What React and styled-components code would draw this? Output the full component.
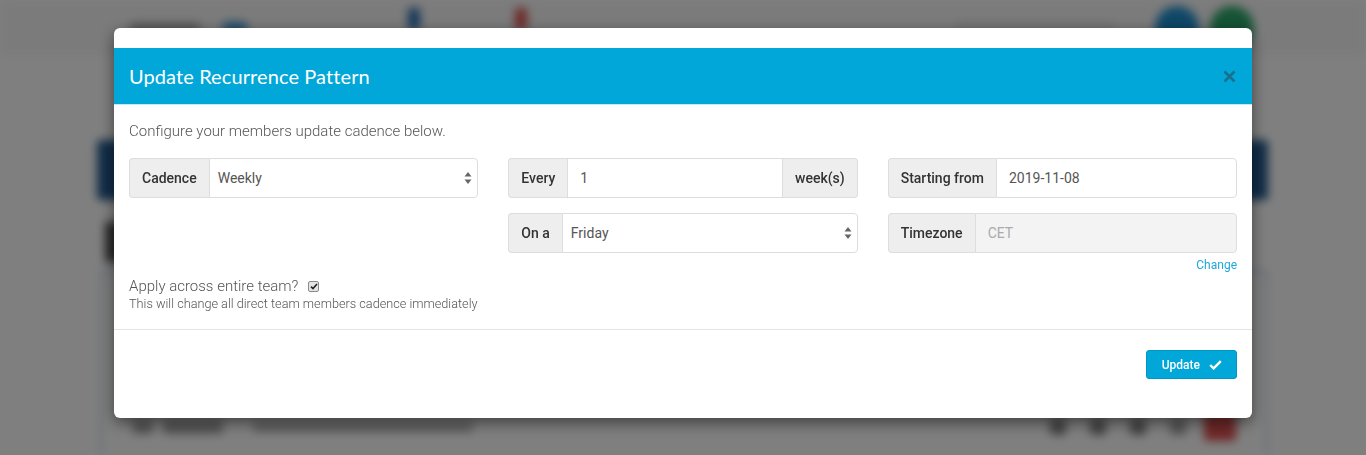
import React from "react";
import styled, { createGlobalStyle } from "styled-components";

const Global = createGlobalStyle`
  html, body { margin: 0; padding: 0; }
  body {
    width: 1366px;
    height: 455px;
    overflow: hidden;
    background: #fff;
    font-family: Roboto, "Liberation Sans", Arial, sans-serif;
  }
  * { box-sizing: border-box; }
`;

/* ---------- page behind the dialog ---------- */

const Page = styled.div`
  width: 1366px;
  height: 455px;
  overflow: hidden;
  filter: blur(5px);
  background: #fff;
`;

const TopNav = styled.div`
  height: 56px;
  background: #f7f7f7;
  display: flex;
  align-items: center;
  padding: 0 112px 0 130px;
`;

const Blob = styled.div`
  width: ${(p) => p.$w}px;
  height: ${(p) => p.$h}px;
  background: ${(p) => p.$c};
  border-radius: ${(p) => p.$r || 3}px;
  margin-left: ${(p) => p.$ml || 0}px;
  margin-top: ${(p) => p.$mt || 0}px;
  flex-shrink: 0;
`;

const NavAvatar = styled.div`
  width: 44px;
  height: 44px;
  border-radius: 50%;
  background: ${(p) => p.$c};
  margin-left: ${(p) => p.$ml || 0}px;
  flex-shrink: 0;
`;

const Spacer = styled.div`
  flex: 1;
`;

const PageBody = styled.div`
  padding: 84px 98px 0 97px;
  display: flex;
  flex-direction: column;
`;

const Banner = styled.div`
  height: 60px;
  background: #235b8f;
  border-radius: 4px;
`;

const SideBlock = styled.div`
  margin-top: 22px;
  width: 34px;
  height: 40px;
  background: #555;
  margin-left: 8px;
`;

const Card = styled.div`
  margin: 8px 0 0 3px;
  border: 3px solid #c9dced;
  border-bottom: none;
  height: 200px;
  display: flex;
  align-items: flex-start;
  padding: 140px 29px 0 30px;
`;

const CardRow = styled.div`
  flex: 1;
  display: flex;
  align-items: center;
  gap: 10px;
`;

/* ---------- dialog ---------- */

const Backdrop = styled.div`
  position: fixed;
  inset: 0;
  background: rgba(0, 0, 0, 0.5);
`;

const Dialog = styled.div`
  position: fixed;
  left: 114px;
  top: 28px;
  width: 1138px;
  height: 390px;
  background: #fff;
  border-radius: 6px;
  box-shadow: 0 5px 15px rgba(0, 0, 0, 0.5);
  padding-top: 20px;
  display: flex;
  flex-direction: column;
  overflow: hidden;
`;

const Header = styled.div`
  height: 57px;
  background: #00a7d8;
  border-bottom: 1px solid #c5e9f4;
  display: flex;
  align-items: center;
  justify-content: space-between;
  padding: 0 15px;
`;

const Title = styled.h4`
  margin: 0;
  color: #fff;
  font-family: Lato, "Open Sans", sans-serif;
  font-weight: 400;
  font-size: 20px;
  letter-spacing: 0.1px;
`;

const CloseBtn = styled.button`
  border: none;
  background: transparent;
  padding: 0;
  margin-right: 1px;
  width: 14px;
  height: 14px;
  display: flex;
  align-items: center;
  justify-content: center;
  cursor: pointer;
`;

const Body = styled.div`
  padding: 16px 15px 0;
  height: 225px;
  border-bottom: 1px solid #e5e5e5;
`;

const Intro = styled.p`
  margin: 0 0 17px;
  font-size: 15px;
  font-weight: 300;
  line-height: 20px;
  color: #555;
`;

const Grid = styled.div`
  display: grid;
  grid-template-columns: repeat(3, 1fr);
  column-gap: 30px;
`;

const Column = styled.div`
  display: flex;
  flex-direction: column;
  gap: 15px;
`;

const Group = styled.div`
  display: flex;
  height: 40px;
`;

const Addon = styled.span`
  display: flex;
  align-items: center;
  padding: 0 12px;
  background: #eee;
  border: 1px solid #ddd;
  color: #333;
  font-size: 14px;
  font-weight: 500;
  white-space: nowrap;
  border-radius: ${(p) => (p.$end ? "0 4px 4px 0" : "4px 0 0 4px")};
  ${(p) => (p.$end ? "border-left: none;" : "border-right: none;")}
`;

const Field = styled.div`
  flex: 1;
  position: relative;
  display: flex;
  align-items: center;
  border: 1px solid #ddd;
  background: ${(p) => (p.$disabled ? "#f3f3f3" : "#fff")};
  border-radius: ${(p) => (p.$mid ? "0" : "0 4px 4px 0")};
  padding: 0 12px;
  font-size: 14px;
  color: ${(p) => (p.$disabled ? "#aaa" : "#555")};
  ${(p) => p.$select && "padding-left: 8px;"}
`;

const Arrows = styled.svg`
  position: absolute;
  right: 5px;
  top: 50%;
  transform: translateY(-50%);
`;

const HelpLink = styled.a`
  align-self: flex-end;
  margin-top: -11px;
  font-size: 12px;
  color: #1ea8d8;
  text-decoration: none;
  line-height: 16px;
`;

const ApplyRow = styled.div`
  margin-top: 4px;
  display: flex;
  align-items: center;
  gap: 10px;
  font-size: 15px;
  font-weight: 300;
  color: #555;
  line-height: 18px;
`;

const Check = styled.span`
  width: 11px;
  height: 11px;
  border-radius: 2px;
  border: 1px solid #8a8a8a;
  background: #e4e4e4;
  display: flex;
  align-items: center;
  justify-content: center;
`;

const Note = styled.div`
  margin-top: 1px;
  font-size: 12.7px;
  font-weight: 300;
  color: #555;
  line-height: 16px;
`;

const Footer = styled.div`
  padding: 20px 15px;
  display: flex;
  justify-content: flex-end;
`;

const PrimaryBtn = styled.button`
  display: flex;
  align-items: center;
  gap: 9px;
  height: 29px;
  padding: 0 14px 0 15px;
  background: #00a7d8;
  border: 1px solid #0097c4;
  border-radius: 3px;
  color: #fff;
  font-family: Roboto, sans-serif;
  font-size: 12px;
  font-weight: 500;
  cursor: pointer;
`;

const SelectArrows = () => (
  <Arrows width="8" height="14" viewBox="0 0 8 14">
    <path d="M4 1 L7.5 5.5 H0.5 Z" fill="#666" />
    <path d="M4 13 L7.5 8.5 H0.5 Z" fill="#666" />
  </Arrows>
);

export default function App() {
  return (
    <>
      <Global />
      <Page>
        <TopNav>
          <Blob $w={70} $h={10} $c="#aaa" />
          <Blob $w={26} $h={12} $c="#3a9ad6" $ml={22} $r={6} />
          <Blob $w={12} $h={22} $c="#2a6fb3" $ml={160} $mt={-18} />
          <Blob $w={12} $h={22} $c="#d9534f" $ml={95} $mt={-18} />
          <Spacer />
          <Blob $w={160} $h={16} $c="#eaeaea" />
          <NavAvatar $c="#1e8fd0" $ml={40} />
          <NavAvatar $c="#2aa86a" $ml={11} />
        </TopNav>
        <PageBody>
          <Banner />
          <SideBlock />
          <Card>
            <CardRow>
              <Blob $w={20} $h={14} $c="#aaa" />
              <Blob $w={60} $h={14} $c="#aaa" />
              <Blob $w={220} $h={10} $c="#bbb" $ml={20} />
              <Spacer />
              <Blob $w={16} $h={16} $c="#888" />
              <Blob $w={16} $h={16} $c="#888" $ml={14} />
              <Blob $w={16} $h={16} $c="#888" $ml={14} />
              <Blob $w={16} $h={16} $c="#aaa" $ml={14} />
              <Blob $w={32} $h={28} $c="#e05050" $ml={8} />
            </CardRow>
          </Card>
        </PageBody>
      </Page>

      <Backdrop />

      <Dialog role="dialog">
        <Header>
          <Title>Update Recurrence Pattern</Title>
          <CloseBtn aria-label="Close">
            <svg width="13" height="13" viewBox="0 0 13 13">
              <path
                d="M1.5 1.5 L11.5 11.5 M11.5 1.5 L1.5 11.5"
                stroke="#17708c"
                strokeWidth="2.6"
              />
            </svg>
          </CloseBtn>
        </Header>

        <Body>
          <Intro>Configure your members update cadence below.</Intro>
          <Grid>
            <Column>
              <Group>
                <Addon>Cadence</Addon>
                <Field $select>
                  Weekly
                  <SelectArrows />
                </Field>
              </Group>
            </Column>
            <Column>
              <Group>
                <Addon>Every</Addon>
                <Field $mid>1</Field>
                <Addon $end>week(s)</Addon>
              </Group>
              <Group>
                <Addon>On a</Addon>
                <Field $select>
                  Friday
                  <SelectArrows />
                </Field>
              </Group>
            </Column>
            <Column>
              <Group>
                <Addon>Starting from</Addon>
                <Field>2019-11-08</Field>
              </Group>
              <Group>
                <Addon>Timezone</Addon>
                <Field $disabled>CET</Field>
              </Group>
              <HelpLink href="#">Change</HelpLink>
            </Column>
          </Grid>
          <ApplyRow>
            Apply across entire team?
            <Check>
              <svg width="8" height="7" viewBox="0 0 8 7">
                <path
                  d="M1 3.6 L3 5.6 L7 1"
                  fill="none"
                  stroke="#222"
                  strokeWidth="1.6"
                />
              </svg>
            </Check>
          </ApplyRow>
          <Note>This will change all direct team members cadence immediately</Note>
        </Body>

        <Footer>
          <PrimaryBtn>
            Update
            <svg width="13" height="10" viewBox="0 0 13 10">
              <path
                d="M1.2 5 L4.6 8.4 L11.8 1.2"
                fill="none"
                stroke="#fff"
                strokeWidth="2.4"
              />
            </svg>
          </PrimaryBtn>
        </Footer>
      </Dialog>
    </>
  );
}
